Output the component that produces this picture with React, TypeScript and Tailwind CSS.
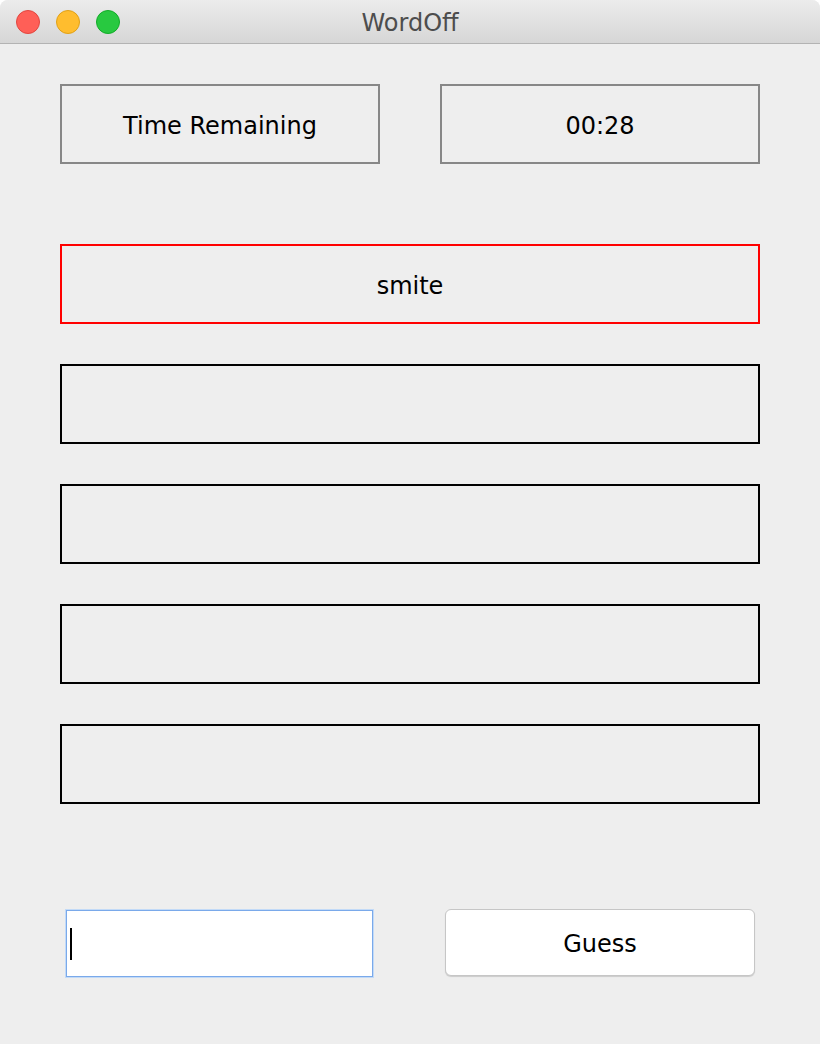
const font = { fontFamily: '"DejaVu Sans", "Liberation Sans", sans-serif' };

function Slot({ word, tone = 'black' }: { word?: string; tone?: 'black' | 'red' | 'gray' }) {
  const border =
    tone === 'red' ? 'border-[#ff0000]' : tone === 'gray' ? 'border-[#878787]' : 'border-black';
  return (
    <div
      className={`flex h-20 items-center justify-center border-2 ${border} pt-1 text-[24px] text-black`}
    >
      {word}
    </div>
  );
}

export default function App() {
  return (
    <div className="min-h-[1044px] w-[820px] bg-white" style={font}>
      <div className="flex min-h-[1044px] flex-col overflow-hidden rounded-t-lg bg-[#eeeeee]">
        <header className="relative flex h-11 items-center justify-center border-b border-[#b3b3b3] bg-gradient-to-b from-[#ececec] to-[#d6d6d6] pt-[3px]">
          <div className="absolute left-4 top-[10px] flex gap-4">
            <span className="size-6 rounded-full border border-[#e2463f] bg-[#ff5f57]" />
            <span className="size-6 rounded-full border border-[#e1a116] bg-[#ffbd2e]" />
            <span className="size-6 rounded-full border border-[#12ac28] bg-[#28c940]" />
          </div>
          <span className="text-[24px] text-[#4d4d4d]">WordOff</span>
        </header>

        <main className="flex flex-col px-[60px] pt-10">
          <div className="flex justify-between">
            <div className="w-80">
              <Slot word="Time Remaining" tone="gray" />
            </div>
            <div className="w-80">
              <Slot word="00:28" tone="gray" />
            </div>
          </div>

          <div className="mt-20 flex flex-col gap-10">
            <Slot word="smite" tone="red" />
            <Slot />
            <Slot />
            <Slot />
            <Slot />
          </div>

          <div className="mt-[105px] flex items-start justify-between pl-[6px] pr-[5px]">
            <div className="mt-px flex h-[67px] w-[307px] items-center border border-[#7aa9ea] bg-white pl-[3px] shadow-[0_0_0_1px_#c2daf7]">
              <span className="h-8 w-[2px] bg-black" />
            </div>
            <button className="h-[67px] w-[310px] rounded-md border border-[#c6c6c6] bg-white pt-[2px] text-[24px] text-black shadow-[0_1px_1px_rgba(0,0,0,0.15)]">
              Guess
            </button>
          </div>
        </main>
      </div>
    </div>
  );
}
